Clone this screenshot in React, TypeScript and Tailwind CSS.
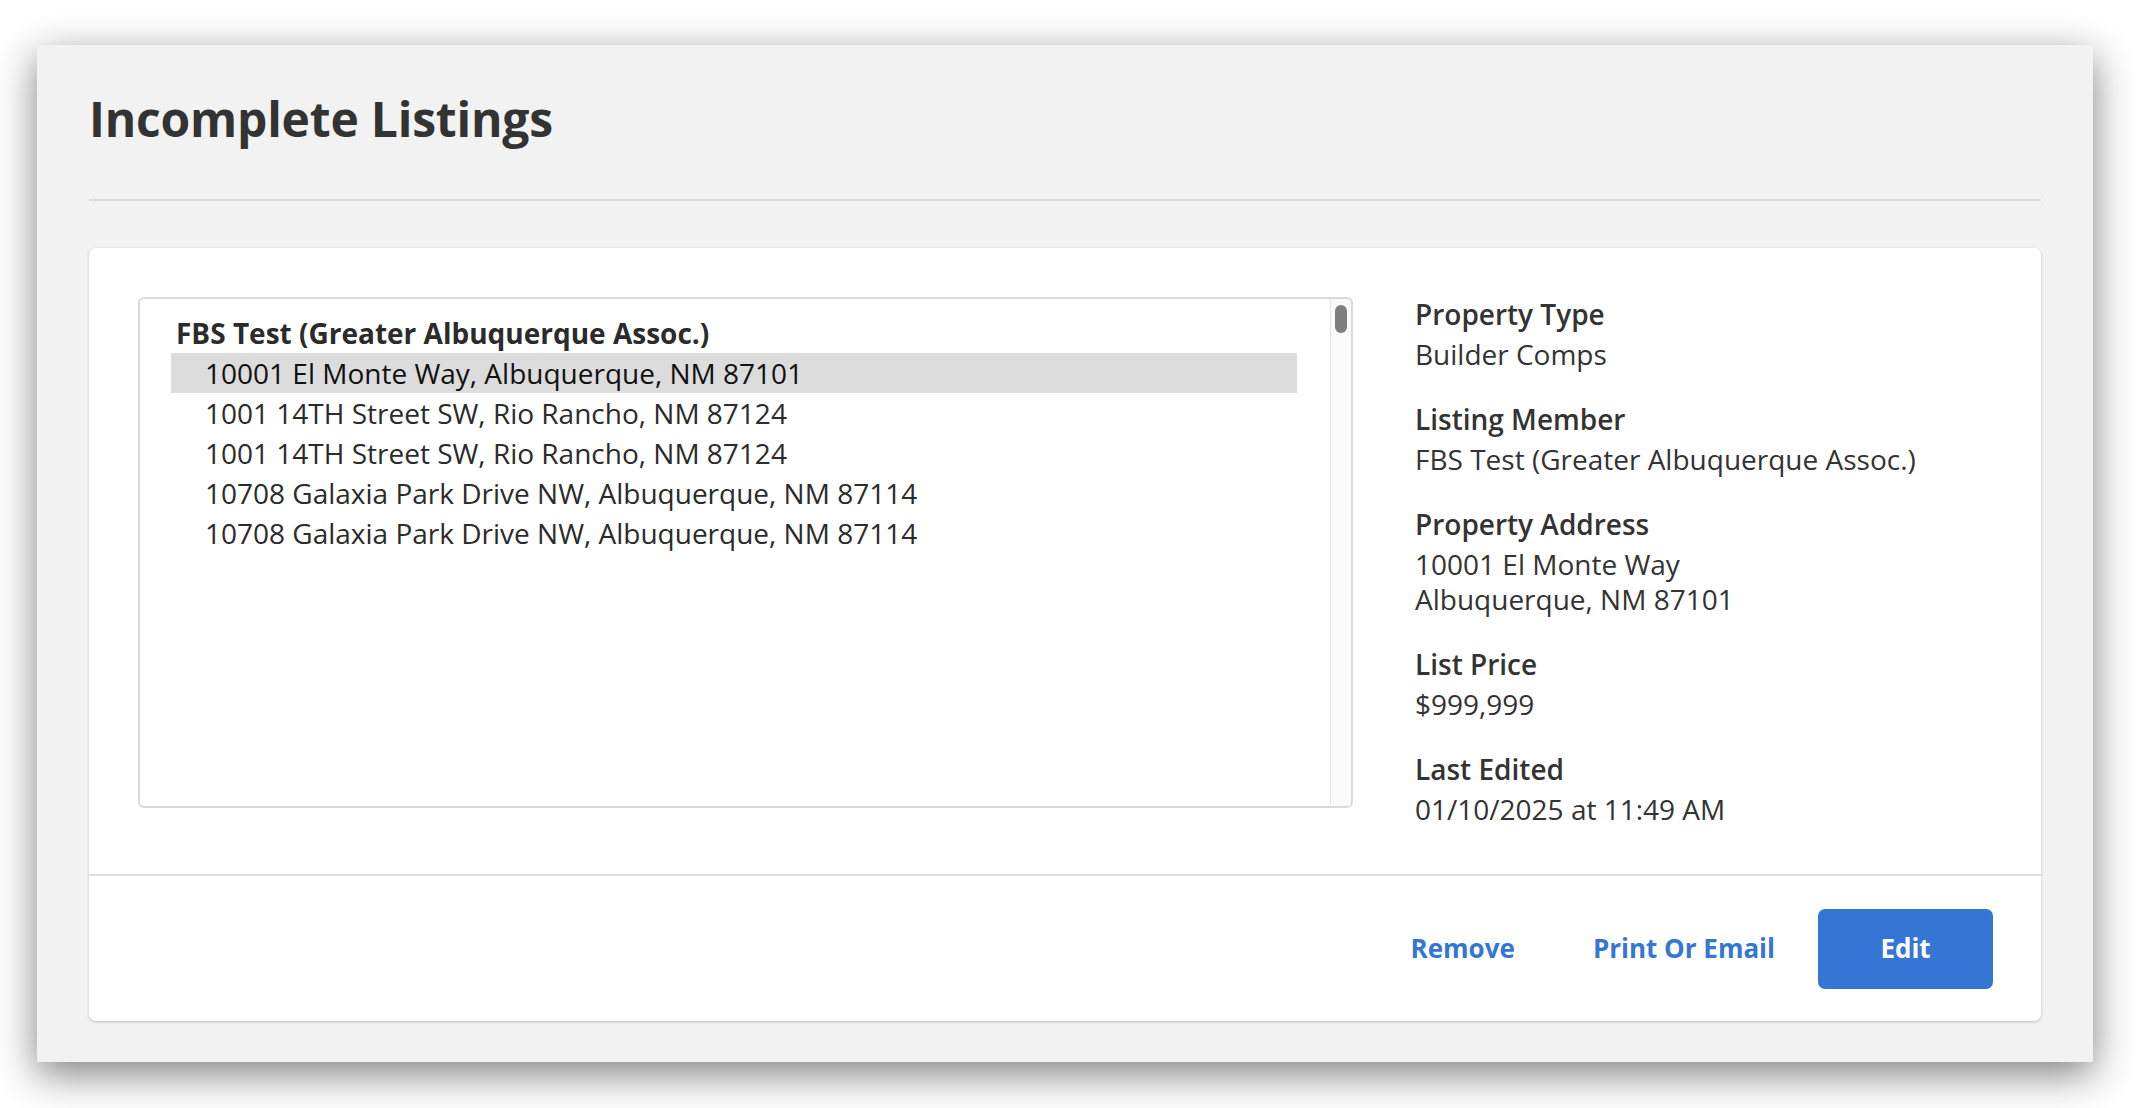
const ROWS = [
  '10001 El Monte Way, Albuquerque, NM 87101',
  '1001 14TH Street SW, Rio Rancho, NM 87124',
  '1001 14TH Street SW, Rio Rancho, NM 87124',
  '10708 Galaxia Park Drive NW, Albuquerque, NM 87114',
  '10708 Galaxia Park Drive NW, Albuquerque, NM 87114',
]

const DETAILS: { label: string; lines: string[] }[] = [
  { label: 'Property Type', lines: ['Builder Comps'] },
  { label: 'Listing Member', lines: ['FBS Test (Greater Albuquerque Assoc.)'] },
  { label: 'Property Address', lines: ['10001 El Monte Way', 'Albuquerque, NM 87101'] },
  { label: 'List Price', lines: ['$999,999'] },
  { label: 'Last Edited', lines: ['01/10/2025 at 11:49 AM'] },
]

export default function App() {
  return (
    <div className="min-h-screen bg-white pt-[45px] pl-[37px] pr-[55px] pb-[46px] font-['Open_Sans',sans-serif] text-[#333]">
      <div className="h-[1017px] bg-[#f2f2f2] px-[52px] pt-[50px] shadow-[0_12px_38px_rgba(0,0,0,0.5)]">
        {/* Title */}
        <h1 className="text-[48px] leading-none font-bold tracking-[-0.2px] text-[#333]">Incomplete Listings</h1>
        <div className="mt-[56px] h-[2px] bg-[#dcdcdc]" />

        {/* Card */}
        <div className="mt-[47px] rounded-[7px] bg-white shadow-[0_1px_3px_rgba(0,0,0,0.22)]">
          <div className="flex h-[626px] pl-[49px] pt-[49px]">
            {/* Listbox */}
            <div className="flex h-[511px] w-[1215px] rounded-[6px] border-2 border-[#dadada]">
              <div className="flex-1 pl-[31px] pr-[33px] pt-[13px]">
                <div className="flex h-[41px] items-center pl-[5px] text-[28px] font-bold text-[#2b2b2b]">
                  FBS Test (Greater Albuquerque Assoc.)
                </div>
                {ROWS.map((r, i) => (
                  <div
                    key={i}
                    className={`flex h-[40px] items-center pl-[34px] text-[28px] ${i === 0 ? 'bg-[#dcdcdc] text-[#111]' : 'text-[#2b2b2b]'}`}
                  >
                    {r}
                  </div>
                ))}
              </div>
              <div className="w-[21px] rounded-r-[4px] border-l border-[#e4e4e4] bg-[#fafafa] pt-[6px]">
                <div className="mx-auto h-[28px] w-[12px] rounded-full bg-[#7f7f7f]" />
              </div>
            </div>

            {/* Details */}
            <div className="ml-[62px] flex flex-col gap-[30px]">
              {DETAILS.map(d => (
                <div key={d.label} className="text-[28px] leading-[35px]">
                  <div className="mb-[5px] font-semibold text-[#333]">{d.label}</div>
                  {d.lines.map(l => (
                    <div key={l} className="text-[#333]">{l}</div>
                  ))}
                </div>
              ))}
            </div>
          </div>

          <div className="h-[2px] bg-[#dddddd]" />

          {/* Footer */}
          <div className="flex h-[145px] items-center justify-end pr-[48px] text-[26px] font-bold">
            <button className="text-[#3576d5]">Remove</button>
            <button className="ml-[78px] text-[#3576d5]">Print Or Email</button>
            <button className="ml-[43px] h-[80px] w-[175px] rounded-[7px] bg-[#3576d5] text-white">Edit</button>
          </div>
        </div>
      </div>
    </div>
  )
}
